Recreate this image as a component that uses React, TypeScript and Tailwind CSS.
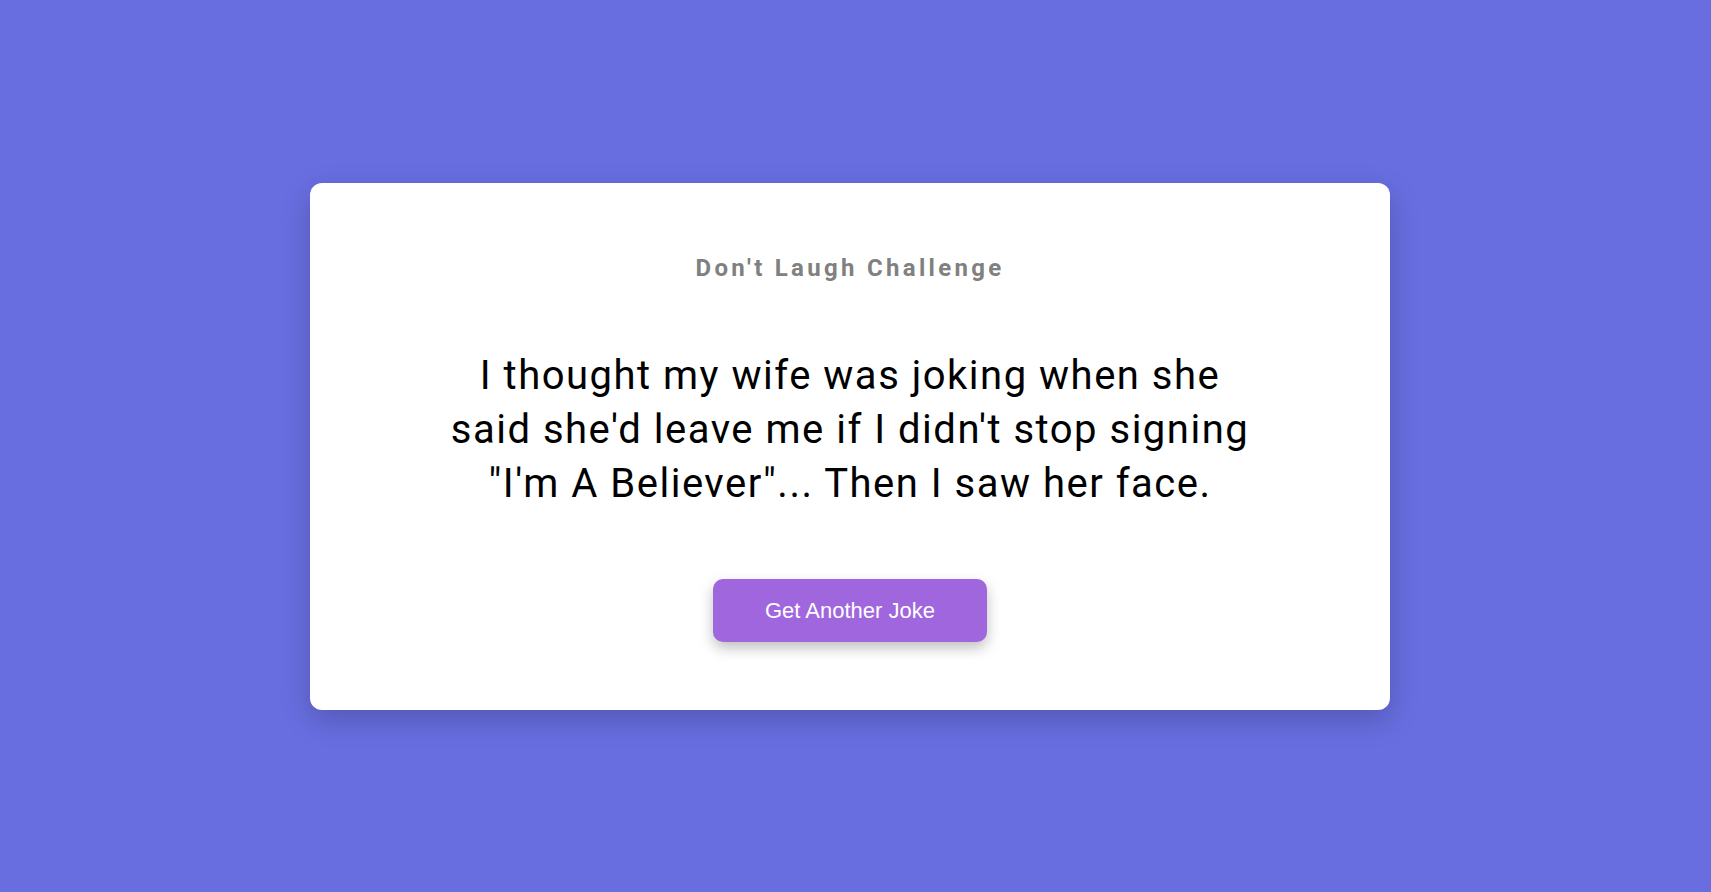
export default function App() {
  return (
    <div className="min-h-screen w-full bg-[#686ee0] pr-[11px] flex items-center justify-center font-['Roboto',sans-serif]">
      <div className="w-[1080px] bg-white rounded-xl shadow-[0_10px_30px_rgba(0,0,0,0.2)] pt-[67px] pb-[68px] flex flex-col items-center">
        <h1 className="text-[24px] leading-[36px] font-bold tracking-[3.3px] text-[#808080]">
          Don't Laugh Challenge
        </h1>
        <p className="mt-[63px] max-w-[810px] text-center text-[40px] leading-[54px] tracking-[1.5px] text-black">
          I thought my wife was joking when she said she'd leave me if I didn't stop signing "I'm A Believer"... Then I saw her face.
        </p>
        <button className="mt-[68px] w-[274px] h-[63px] rounded-[10px] bg-[#a066de] text-white text-[22px] font-['Liberation_Sans',Arial,sans-serif] shadow-[0_6px_14px_rgba(0,0,0,0.25)]">
          Get Another Joke
        </button>
      </div>
    </div>
  )
}
